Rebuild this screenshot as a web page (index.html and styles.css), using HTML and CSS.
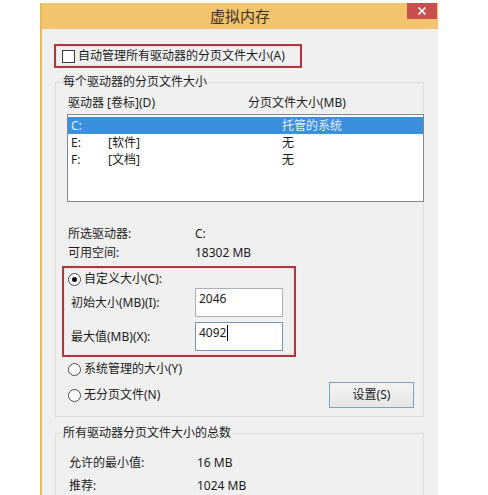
FILE: index.html
```html
<!DOCTYPE html>
<html lang="zh-CN">
<head>
<meta charset="utf-8">
<title>虚拟内存</title>
<link rel="stylesheet" href="styles.css">
</head>
<body>
<div class="window">
  <div class="titlebar">
    <span class="title">虚拟内存</span>
    <span class="close"><svg width="10" height="10" viewBox="0 0 10 10"><path d="M1.5 1.5 L8.5 8.5 M8.5 1.5 L1.5 8.5" stroke="#fff" stroke-width="1.6" fill="none"/></svg></span>
  </div>
  <div class="client">
    <div class="autobox">
      <span class="checkbox"></span>
      <span>自动管理所有驱动器的分页文件大小(A)</span>
    </div>
    <fieldset class="group">
      <legend>每个驱动器的分页文件大小</legend>
      <div class="group-body">
        <div class="list-head"><span>驱动器 [卷标](D)</span><span>分页文件大小(MB)</span></div>
        <div class="listbox">
          <div class="row selected"><span>C:</span><span></span><span>托管的系统</span></div>
          <div class="row"><span>E:</span><span>[软件]</span><span>无</span></div>
          <div class="row"><span>F:</span><span>[文档]</span><span>无</span></div>
        </div>
        <div class="info">
          <span>所选驱动器:</span><span>C:</span>
          <span>可用空间:</span><span>18302 MB</span>
        </div>
        <div class="custombox">
          <div class="radio-line"><span class="radio checked"></span><span>自定义大小(C):</span></div>
          <div class="field"><span>初始大小(MB)(I):</span><div class="textbox">2046</div></div>
          <div class="field second"><span>最大值(MB)(X):</span><div class="textbox focused">4092<span class="caret"></span></div></div>
        </div>
        <div class="radio-line opt"><span class="radio"></span><span>系统管理的大小(Y)</span></div>
        <div class="opt-row">
          <div class="radio-line"><span class="radio"></span><span>无分页文件(N)</span></div>
          <button class="btn" type="button">设置(S)</button>
        </div>
      </div>
    </fieldset>
    <fieldset class="group group-total">
      <legend>所有驱动器分页文件大小的总数</legend>
      <div class="totals">
        <span>允许的最小值:</span><span>16 MB</span>
        <span>推荐:</span><span>1024 MB</span>
      </div>
    </fieldset>
  </div>
</div>
</body>
</html>
```
FILE: styles.css
```css
html, body {
  margin: 0;
  padding: 0;
  background: #ffffff;
  overflow: hidden;
}

body {
  font-family: "Noto Sans", "Noto Sans CJK SC", sans-serif;
  font-size: 12px;
  color: #1c1c1c;
}

.window {
  box-sizing: border-box;
  margin: 3px 0 0 40px;
  width: 398px;
  height: 492px;
  border-left: 2px solid #e8b75f;
  display: flex;
  flex-direction: column;
  overflow: hidden;
}

.titlebar {
  flex: none;
  height: 26px;
  background: #f1c46d;
  display: grid;
  grid-template-columns: 1fr auto 1fr;
}

.title {
  grid-column: 2;
  align-self: center;
  font-size: 15px;
  line-height: 20px;
  color: #3a3124;
}

.close {
  grid-column: 3;
  justify-self: end;
  align-self: start;
  width: 30px;
  height: 16px;
  margin-right: 1px;
  background: #c84f4e;
  display: flex;
  align-items: center;
  justify-content: center;
}

.client {
  flex: 1;
  background: #f0f0f0;
  padding: 15px 0 0 12px;
}

.autobox {
  box-sizing: border-box;
  width: 248px;
  height: 24px;
  border: 2px solid #b3363f;
  box-shadow: inset 0 0 2px #e6b8bb;
  display: flex;
  align-items: center;
  gap: 3px;
  padding-left: 6px;
  line-height: 16px;
}

.checkbox {
  flex: none;
  box-sizing: border-box;
  width: 13px;
  height: 13px;
  border: 1px solid #3a3a3a;
  background: #ffffff;
}

.group {
  box-sizing: border-box;
  width: 369px;
  min-width: 0;
  margin: 6px 0 0 1px;
  padding: 0;
  border: 1px solid #dcdcdc;
}

.group legend {
  margin-left: 6px;
  padding: 0 1px;
  line-height: 16px;
  font-size: 12px;
}

.group-body {
  padding: 5px 0 8px 6px;
}

.list-head {
  display: grid;
  grid-template-columns: 180px auto;
  margin-left: 6px;
  line-height: 16px;
}

.listbox {
  box-sizing: border-box;
  width: 357px;
  height: 88px;
  margin: 3px 0 0 5px;
  padding: 2px 0 0 0;
  border: 1px solid #828790;
  background: #ffffff;
}

.row {
  display: grid;
  grid-template-columns: 37px 174px 1fr;
  padding-left: 3px;
  height: 17px;
  line-height: 17px;
}

.row.selected {
  background: #3a90dc;
  color: #e4eefa;
}

.info {
  display: grid;
  grid-template-columns: 127px auto;
  margin: 22px 0 0 6px;
  line-height: 19px;
}

.custombox {
  box-sizing: border-box;
  width: 234px;
  height: 91px;
  margin-top: 4px;
  padding: 3px 0 0 4px;
  border: 2px solid #b3363f;
  box-shadow: inset 0 0 2px #e6b8bb;
}

.radio-line {
  display: flex;
  align-items: center;
  gap: 3px;
  line-height: 16px;
}

.radio {
  flex: none;
  box-sizing: border-box;
  width: 13px;
  height: 13px;
  border: 1px solid #4a4a4a;
  border-radius: 50%;
  background: #ffffff;
  display: flex;
  align-items: center;
  justify-content: center;
}

.radio.checked::after {
  content: "";
  width: 5px;
  height: 5px;
  border-radius: 50%;
  background: #111111;
}

.field {
  display: grid;
  grid-template-columns: 124px 88px;
  align-items: center;
  margin-top: 1px;
  padding-left: 3px;
  line-height: 16px;
}

.field.second {
  margin-top: 5px;
}

.textbox {
  box-sizing: border-box;
  height: 29px;
  padding: 2px 3px;
  border: 1px solid #abb1bb;
  background: #ffffff;
  line-height: 16px;
}

.textbox.focused {
  border-color: #7694b8;
}

.caret {
  display: inline-block;
  width: 1px;
  height: 16px;
  margin-left: 1px;
  background: #000000;
  vertical-align: top;
}

.opt {
  margin: 4px 0 0 6px;
}

.opt-row {
  display: flex;
  align-items: center;
  margin-top: 5px;
  padding-left: 6px;
}

.btn {
  box-sizing: border-box;
  width: 85px;
  height: 26px;
  margin: 0 9px 0 auto;
  padding: 0;
  border: 1px solid #7ea2c3;
  background: linear-gradient(#f3f3f3, #e6e6e6);
  font: inherit;
  color: #1c1c1c;
  line-height: 16px;
}

.group-total {
  margin-top: 8px;
}

.totals {
  display: grid;
  grid-template-columns: 128px auto;
  row-gap: 7px;
  padding: 14px 0 40px 13px;
  line-height: 16px;
}
```
